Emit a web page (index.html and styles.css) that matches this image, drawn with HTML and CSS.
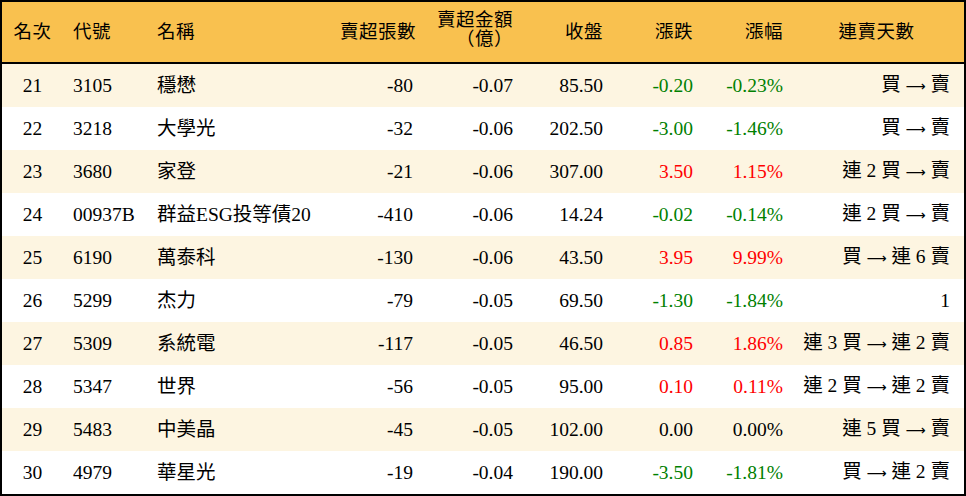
FILE: index.html
```html
<!DOCTYPE html>
<html lang="zh-Hant">
<head>
<meta charset="utf-8">
<title>賣超排行</title>
<link rel="stylesheet" href="styles.css">
</head>
<body>
<div class="frame">
<table class="rank">
<colgroup>
<col class="c1"><col class="c2"><col class="c3"><col class="c4"><col class="c5"><col class="c6"><col class="c7"><col class="c8"><col class="c9">
</colgroup>
<thead>
<tr>
<th class="ctr">名次</th>
<th class="lft">代號</th>
<th class="lft">名稱</th>
<th class="rgt">賣超張數</th>
<th class="rgt two">賣超金額<br>（億）</th>
<th class="rgt">收盤</th>
<th class="rgt">漲跌</th>
<th class="rgt">漲幅</th>
<th class="ctr last">連賣天數</th>
</tr>
</thead>
<tbody>
<tr class="alt"><td class="ctr">21</td><td class="lft">3105</td><td class="lft">穩懋</td><td class="rgt">-80</td><td class="rgt">-0.07</td><td class="rgt">85.50</td><td class="rgt dn">-0.20</td><td class="rgt dn">-0.23%</td><td class="rgt last">買 <span class="arr">⟶</span> 賣</td></tr>
<tr><td class="ctr">22</td><td class="lft">3218</td><td class="lft">大學光</td><td class="rgt">-32</td><td class="rgt">-0.06</td><td class="rgt">202.50</td><td class="rgt dn">-3.00</td><td class="rgt dn">-1.46%</td><td class="rgt last">買 <span class="arr">⟶</span> 賣</td></tr>
<tr class="alt"><td class="ctr">23</td><td class="lft">3680</td><td class="lft">家登</td><td class="rgt">-21</td><td class="rgt">-0.06</td><td class="rgt">307.00</td><td class="rgt up">3.50</td><td class="rgt up">1.15%</td><td class="rgt last">連 2 買 <span class="arr">⟶</span> 賣</td></tr>
<tr><td class="ctr">24</td><td class="lft">00937B</td><td class="lft">群益ESG投等債20</td><td class="rgt">-410</td><td class="rgt">-0.06</td><td class="rgt">14.24</td><td class="rgt dn">-0.02</td><td class="rgt dn">-0.14%</td><td class="rgt last">連 2 買 <span class="arr">⟶</span> 賣</td></tr>
<tr class="alt"><td class="ctr">25</td><td class="lft">6190</td><td class="lft">萬泰科</td><td class="rgt">-130</td><td class="rgt">-0.06</td><td class="rgt">43.50</td><td class="rgt up">3.95</td><td class="rgt up">9.99%</td><td class="rgt last">買 <span class="arr">⟶</span> 連 6 賣</td></tr>
<tr><td class="ctr">26</td><td class="lft">5299</td><td class="lft">杰力</td><td class="rgt">-79</td><td class="rgt">-0.05</td><td class="rgt">69.50</td><td class="rgt dn">-1.30</td><td class="rgt dn">-1.84%</td><td class="rgt last">1</td></tr>
<tr class="alt"><td class="ctr">27</td><td class="lft">5309</td><td class="lft">系統電</td><td class="rgt">-117</td><td class="rgt">-0.05</td><td class="rgt">46.50</td><td class="rgt up">0.85</td><td class="rgt up">1.86%</td><td class="rgt last">連 3 買 <span class="arr">⟶</span> 連 2 賣</td></tr>
<tr><td class="ctr">28</td><td class="lft">5347</td><td class="lft">世界</td><td class="rgt">-56</td><td class="rgt">-0.05</td><td class="rgt">95.00</td><td class="rgt up">0.10</td><td class="rgt up">0.11%</td><td class="rgt last">連 2 買 <span class="arr">⟶</span> 連 2 賣</td></tr>
<tr class="alt"><td class="ctr">29</td><td class="lft">5483</td><td class="lft">中美晶</td><td class="rgt">-45</td><td class="rgt">-0.05</td><td class="rgt">102.00</td><td class="rgt">0.00</td><td class="rgt">0.00%</td><td class="rgt last">連 5 買 <span class="arr">⟶</span> 賣</td></tr>
<tr><td class="ctr">30</td><td class="lft">4979</td><td class="lft">華星光</td><td class="rgt">-19</td><td class="rgt">-0.04</td><td class="rgt">190.00</td><td class="rgt dn">-3.50</td><td class="rgt dn">-1.81%</td><td class="rgt last">買 <span class="arr">⟶</span> 連 2 賣</td></tr>
</tbody>
</table>
</div>
</body>
</html>
```
FILE: styles.css
```css
html, body {
  margin: 0;
  padding: 0;
  background: #ffffff;
}
.frame {
  box-sizing: border-box;
  width: 966px;
  height: 496px;
  border: 2px solid #000;
  overflow: hidden;
}
.rank {
  width: 962px;
  table-layout: fixed;
  border-collapse: separate;
  border-spacing: 0;
  font-family: "Liberation Serif", "Noto Sans CJK TC", serif;
  font-size: 19.5px;
  color: #000;
}
.c1 { width: 61px; }
.c2 { width: 84px; }
.c3 { width: 183px; }
.c4 { width: 93px; }
.c5 { width: 100px; }
.c6 { width: 90px; }
.c7 { width: 90px; }
.c8 { width: 90px; }
.c9 { width: 171px; }
.rank th, .rank td {
  box-sizing: border-box;
  padding: 0 10px;
  vertical-align: middle;
  white-space: nowrap;
}
.rank th {
  height: 62px;
  background: #f9c14f;
  border-bottom: 2px solid #000;
  font-weight: normal;
  font-size: 18.5px;
  letter-spacing: 0.5px;
  line-height: 20px;
}
.rank th.two {
  line-height: 19px;
  padding-bottom: 4px;
}
.rank td {
  height: 43px;
  line-height: 24px;
}
.rank tr.alt td {
  background: #fdf5e1;
}
.rank .last {
  padding-right: 14px;
  padding-left: 10px;
}
.arr {
  font-family: "DejaVu Sans", sans-serif;
  font-size: 14px;
}
.ctr { text-align: center; }
.lft { text-align: left; }
.rgt { text-align: right; }
.up { color: #ff0000; }
.dn { color: #008000; }
```
